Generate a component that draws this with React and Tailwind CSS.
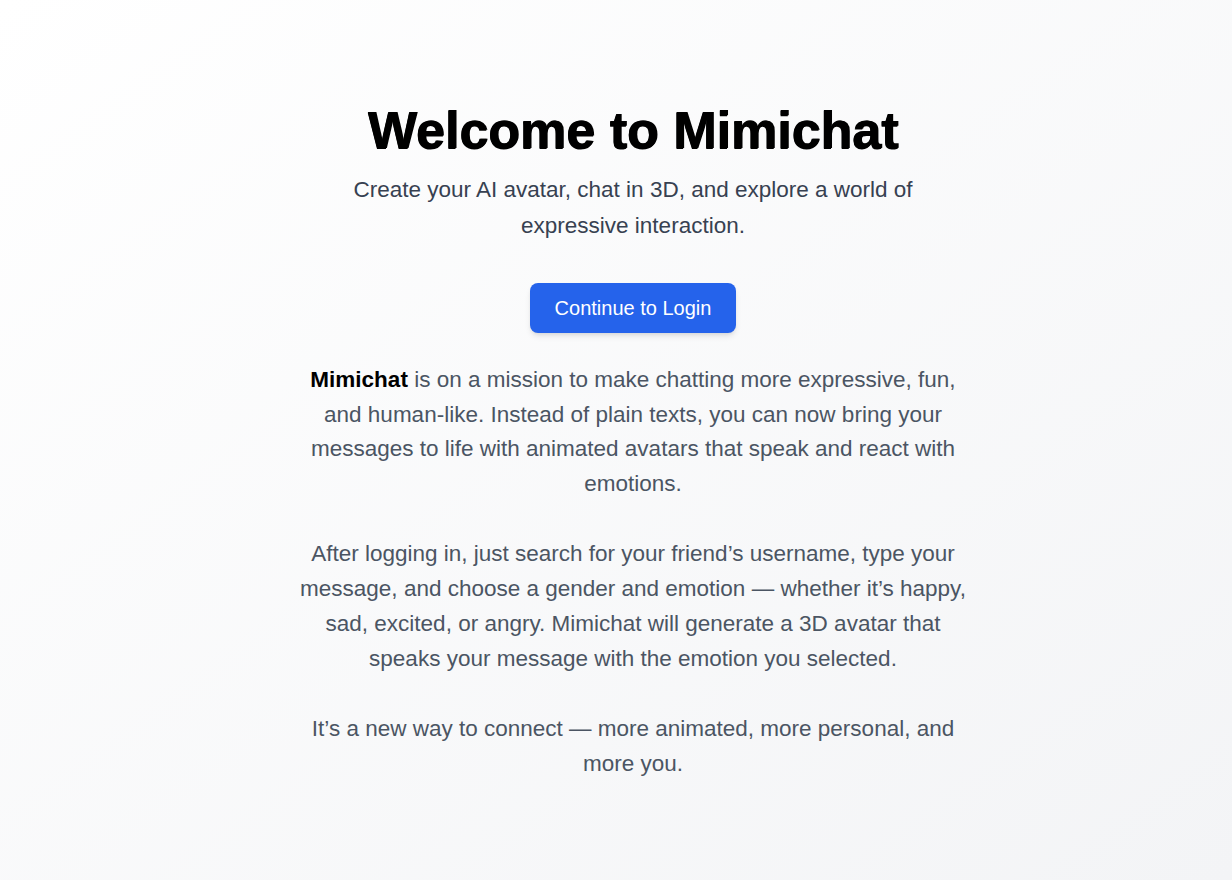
import React from "react";

function App() {
  return (
    <div
      className="min-h-screen flex flex-col items-center justify-center pl-[34px] pt-[5px] bg-gradient-to-br from-white to-[#f3f4f6] text-center"
      style={{ fontFamily: "'Liberation Sans', Arial, sans-serif" }}
    >
      {/* Heading */}
      <h1 className="text-[52px] leading-[52px] font-extrabold text-black [text-shadow:1px_0_0_#000,0_0.5px_0_#000] mb-4">
        Welcome to Mimichat
      </h1>
      <p className="text-[22.5px] leading-9 text-[#374151] max-w-xl mb-[39px]">
        Create your AI avatar, chat in 3D, and explore a world of expressive
        interaction.
      </p>

      <button className="bg-[#2563eb] hover:bg-[#1d4ed8] text-white text-xl leading-7 px-[25px] py-[11px] rounded-lg shadow-md mb-[30px]">
        Continue to Login
      </button>

      {/* About */}
      <div className="max-w-2xl text-[22.5px] leading-[1.55] text-[#4b5563] space-y-[35px]">
        <p>
          <strong className="text-black">Mimichat</strong> is on a mission to
          make chatting more expressive, fun, and human-like. Instead of plain
          texts, you can now bring your messages to life with animated avatars
          that speak and react with emotions.
        </p>
        <p>
          After logging in, just search for your friend’s username, type your
          message, and choose a gender and emotion — whether it’s happy, sad,
          excited, or angry. Mimichat will generate a 3D avatar that speaks
          your message with the emotion you selected.
        </p>
        <p>
          It’s a new way to connect — more animated, more personal, and more
          you.
        </p>
      </div>
    </div>
  );
}

export default App;
